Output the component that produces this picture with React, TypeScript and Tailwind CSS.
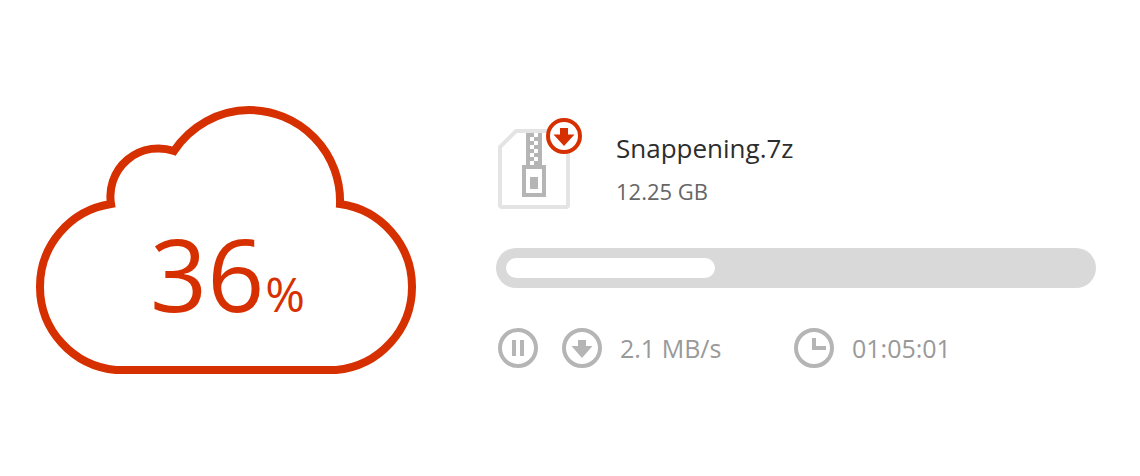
const CLOUD_PATH =
  "M75 98 A48 48 0 0 1 138 45 A91 91 0 0 1 213 4 A91 91 0 0 1 304 98 A83.5 83.5 0 0 1 376 180.5 A83.5 83.5 0 0 1 300 264 H80 A83.5 83.5 0 0 1 4 180.5 A83.5 83.5 0 0 1 75 98 Z";

function CloudProgress({ percent }: { percent: number }) {
  return (
    <div className="grid w-[380px] shrink-0 text-[#d63000]">
      <svg viewBox="0 0 380 268" className="col-start-1 row-start-1 w-full" fill="none" aria-hidden="true">
        <path d={CLOUD_PATH} stroke="currentColor" strokeWidth="8" strokeLinejoin="miter" />
      </svg>
      <p className="col-start-1 row-start-1 flex items-baseline gap-px self-start pl-[114px] pt-[117px] text-[100px] leading-[100px]">
        <span>{percent}</span>
        <span className="text-[48px] leading-none">%</span>
      </p>
    </div>
  );
}

function ArchiveIcon() {
  return (
    <svg width="86" height="92" viewBox="0 0 86 92" fill="none" className="shrink-0" aria-hidden="true">
      <path d="M20 13 H70 Q72 13 72 15 V87 Q72 89 70 89 H6 Q4 89 4 87 V29 Z" stroke="#e4e4e4" strokeWidth="4" strokeLinejoin="round" />
      <path d="M30 15 H46 V47 H50 V79 H26 V47 H30 Z" fill="#b5b5b5" />
      <path
        d="M38 15h4v4h-4z M34 19h4v4h-4z M38 23h4v4h-4z M34 27h4v4h-4z M38 31h4v4h-4z M34 35h4v4h-4z M38 39h4v4h-4z M34 43h4v4h-4z M30 51h16v24h-16z"
        fill="#fff"
      />
      <path d="M34 59h8v12h-8z" fill="#b5b5b5" />
      <circle cx="68" cy="18" r="16" fill="#fff" stroke="#d63000" strokeWidth="4" />
      <path d="M64 10h8v6.5h6.5l-10.5 11.5l-10.5 -11.5h6.5z" fill="#d63000" />
    </svg>
  );
}

function PauseIcon() {
  return (
    <svg width="40" height="40" viewBox="0 0 40 40" fill="none" aria-hidden="true">
      <circle cx="20" cy="20" r="18" stroke="currentColor" strokeWidth="4" />
      <path d="M14 12h4v16h-4z M22 12h4v16h-4z" fill="currentColor" />
    </svg>
  );
}

function SpeedIcon() {
  return (
    <svg width="40" height="40" viewBox="0 0 40 40" fill="none" className="text-[#b5b5b5]" aria-hidden="true">
      <circle cx="20" cy="20" r="18" stroke="currentColor" strokeWidth="4" />
      <path d="M16 12h8v6h6.5l-10.5 12l-10.5 -12h6.5z" fill="currentColor" />
    </svg>
  );
}

function ClockIcon() {
  return (
    <svg width="40" height="40" viewBox="0 0 40 40" fill="none" className="text-[#b5b5b5]" aria-hidden="true">
      <circle cx="20" cy="20" r="18" stroke="currentColor" strokeWidth="4" />
      <path d="M20 10v10h12" stroke="currentColor" strokeWidth="4" />
    </svg>
  );
}

export default function App() {
  const percent = 36;
  return (
    <main className="flex min-h-screen items-start gap-20 bg-white pb-9 pl-9 pr-11 pt-[106px] font-['Open_Sans',sans-serif]">
      <CloudProgress percent={percent} />
      <section className="flex min-w-0 flex-1 flex-col pt-3">
        <header className="flex gap-[34px]">
          <ArchiveIcon />
          <div className="flex flex-col pt-3">
            <h1 className="text-[26px] leading-9 text-[#2d2d2d]">Snappening.7z</h1>
            <p className="mt-[7px] text-[22px] leading-9 text-[#666666]">12.25 GB</p>
          </div>
        </header>
        <div
          role="progressbar"
          aria-label="Download progress"
          aria-valuenow={percent}
          aria-valuemin={0}
          aria-valuemax={100}
          className="mt-[38px] h-10 rounded-full bg-[#d9d9d9] p-[10px]"
        >
          <div className="h-5 rounded-full bg-white" style={{ width: `${percent}%` }} />
        </div>
        <div className="mt-10 flex items-center pl-[2px] text-[25px] leading-10 text-[#999999]">
          <button type="button" aria-label="Pause download" className="mr-6 text-[#b5b5b5]">
            <PauseIcon />
          </button>
          <div className="flex w-[232px] items-center gap-[18px]">
            <SpeedIcon />
            <span>2.1 MB/s</span>
          </div>
          <div className="flex items-center gap-[18px]">
            <ClockIcon />
            <span>01:05:01</span>
          </div>
        </div>
      </section>
    </main>
  );
}
